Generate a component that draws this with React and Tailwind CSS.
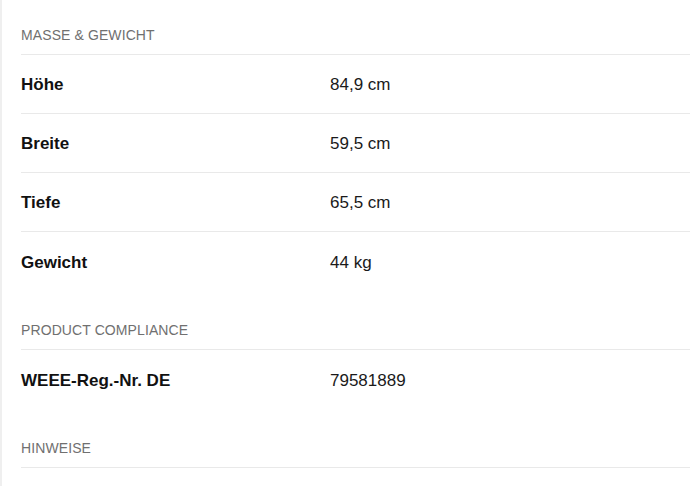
import React from "react";

const font = { fontFamily: '"Liberation Sans", Arial, sans-serif' };

function Header({ children, first }) {
  return (
    <div
      className={`${first ? "pt-[25px]" : "pt-[29px]"} pb-[9px] border-b border-[#e9e9e9] text-[14px] leading-[20px] text-[#707070] uppercase tracking-[0.1px]`}
    >
      {children}
    </div>
  );
}

function Row({ label, value, last }) {
  return (
    <div
      className={`flex items-center pt-[2px] h-[59px] ${last ? "" : "border-b border-[#e9e9e9]"}`}
    >
      <div className="w-[309px] shrink-0 text-[17px] font-bold text-[#111]">{label}</div>
      <div className="text-[17px] text-[#1a1a1a]">{value}</div>
    </div>
  );
}

export default function App() {
  return (
    <div className="w-[690px] h-[486px] overflow-hidden bg-white" style={font}>
      <div className="h-full border-l-2 border-[#efefef] pl-[19px]">
        <Header first>Masse &amp; Gewicht</Header>
        <Row label="Höhe" value="84,9 cm" />
        <Row label="Breite" value="59,5 cm" />
        <Row label="Tiefe" value="65,5 cm" />
        <Row label="Gewicht" value="44 kg" last />
        <Header>Product Compliance</Header>
        <Row label="WEEE-Reg.-Nr. DE" value="79581889" last />
        <Header>Hinweise</Header>
      </div>
    </div>
  );
}
